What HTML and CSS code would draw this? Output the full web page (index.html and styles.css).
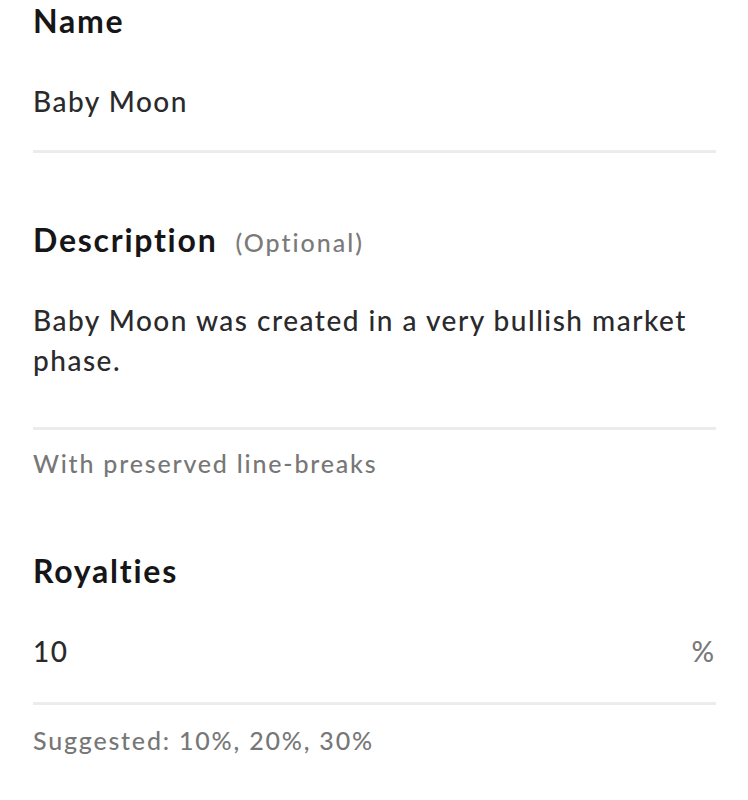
FILE: index.html
```html
<!DOCTYPE html>
<html lang="en">
<head>
<meta charset="utf-8">
<title>Item form</title>
<link rel="stylesheet" href="styles.css">
</head>
<body>
<form class="form">
  <section class="field field-name">
    <h2 class="label">Name</h2>
    <div class="value">Baby Moon</div>
    <div class="divider"></div>
  </section>
  <section class="field field-desc">
    <h2 class="label">Description<span class="optional">(Optional)</span></h2>
    <div class="value value-multi">Baby Moon was created in a very bullish market phase.</div>
    <div class="divider"></div>
    <p class="hint">With preserved line-breaks</p>
  </section>
  <section class="field field-royalties">
    <h2 class="label">Royalties</h2>
    <div class="value value-row"><span>10</span><span class="unit">%</span></div>
    <div class="divider"></div>
    <p class="hint">Suggested: 10%, 20%, 30%</p>
  </section>
</form>
</body>
</html>
```

FILE: styles.css
```css
html, body {
  margin: 0;
  padding: 0;
  background: #ffffff;
}
body {
  font-family: Lato, "Noto Sans", sans-serif;
  -webkit-font-smoothing: antialiased;
}
.form {
  width: 683px;
  padding: 1px 0 0 33px;
  display: flex;
  flex-direction: column;
}
.field {
  display: flex;
  flex-direction: column;
}
.label {
  margin: 0;
  font-size: 32px;
  line-height: 40px;
  font-weight: 700;
  letter-spacing: 1.75px;
  color: #161618;
}
.optional {
  margin-left: 18px;
  font-size: 25px;
  font-weight: 500;
  letter-spacing: 2px;
  color: #7a7a7a;
}
.value {
  margin-top: 40px;
  font-size: 28px;
  line-height: 40px;
  font-weight: 500;
  letter-spacing: 1.5px;
  color: #2a2a2d;
}
.value-multi {
  margin-top: 38px;
  line-height: 40px;
  padding-bottom: 47px;
}
.value-row {
  display: flex;
  justify-content: space-between;
}
.unit {
  color: #7a7a7a;
  letter-spacing: 0;
  padding-right: 2px;
}
.divider {
  margin-top: 29px;
  height: 3px;
  background: #ececec;
}
.value-multi + .divider {
  margin-top: 0;
}
.value-row + .divider {
  margin-top: 31px;
}
.hint {
  margin: 17px 0 0;
  font-size: 25px;
  line-height: 32px;
  font-weight: 500;
  letter-spacing: 1.8px;
  color: #777777;
}
.field-royalties .hint {
  margin-top: 19px;
}
.field-desc {
  margin-top: 67px;
}
.field-royalties {
  margin-top: 72px;
}
```
